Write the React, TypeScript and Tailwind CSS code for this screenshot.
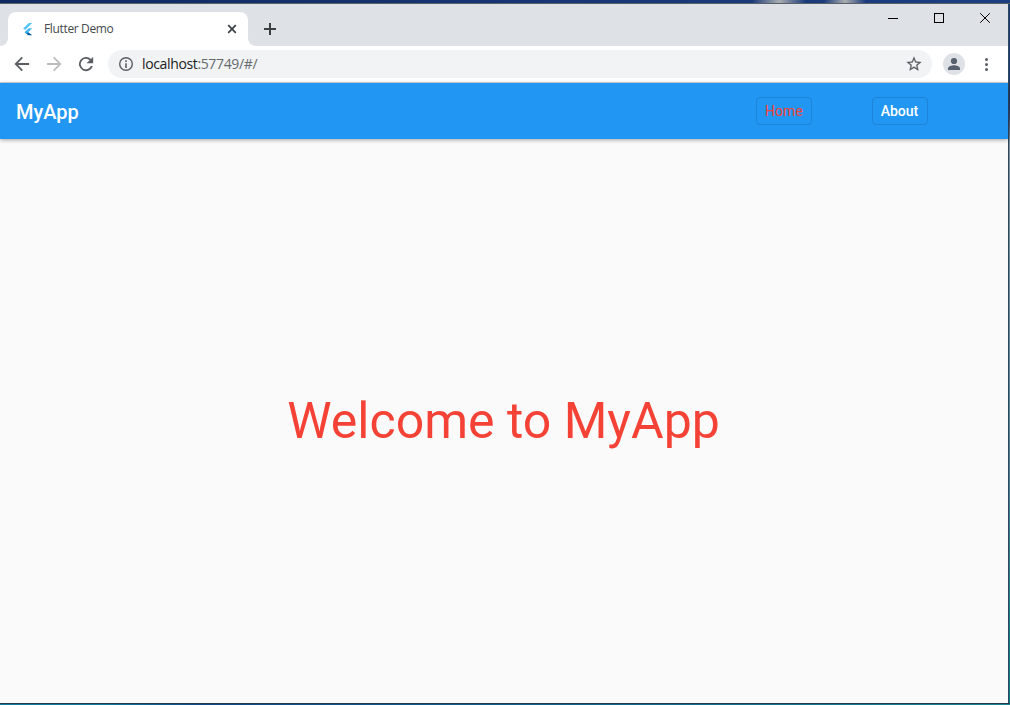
import React from 'react';

const NavButton = ({ label, active = false }: { label: string; active?: boolean }) => (
  <button
    className={
      active
        ? 'flex h-7 w-14 items-center justify-center rounded-[4px] border border-[#1e84d8] text-[14px] leading-none font-normal tracking-[0.1px] text-[#f44336]'
        : 'flex h-7 w-14 items-center justify-center rounded-[4px] border border-[#1e84d8] pr-px text-[14px] leading-none font-medium text-white'
    }
  >
    {label}
  </button>
);

const TabStrip = () => (
  <div className="flex h-[42px] shrink-0 items-start bg-[#dee1e6]">
    <svg className="mt-[34px] shrink-0" width="8" height="8" viewBox="0 0 8 8">
      <path d="M8 0v8H0a8 8 0 0 0 8-8z" fill="#fff" />
    </svg>
    <div className="mt-2 flex h-[34px] w-60 shrink-0 items-center rounded-t-lg bg-white pl-3">
      <svg className="shrink-0" width="16" height="16" viewBox="0 0 16 16">
        <path d="M8.8 2h3.4L5.2 9 3.2 7.4z" fill="#54c5f8" />
        <path d="M8.8 7.2h3.4L8.2 11.2 6.4 9.5z" fill="#40b8f5" />
        <path d="M4.6 11.2l1.8-1.8 1.9 1.8-1.9 1.8z" fill="#29a5ee" />
        <path d="M8.2 11.2l4 3.1H8.6l-2.2-1.3z" fill="#01579b" />
      </svg>
      <span className="ml-2 w-[181px] text-[12px] leading-4 tracking-[-0.35px] whitespace-nowrap text-[#45494d]">Flutter Demo</span>
      <svg className="shrink-0" width="14" height="14" viewBox="0 0 14 14" stroke="#3c4043" strokeWidth="1.7">
        <path d="M3.2 3.2l7.6 7.6M10.8 3.2l-7.6 7.6" />
      </svg>
    </div>
    <svg className="mt-[34px] shrink-0" width="8" height="8" viewBox="0 0 8 8">
      <path d="M0 0v8h8a8 8 0 0 1-8-8z" fill="#fff" />
    </svg>
    <svg className="mt-[18px] ml-[7px] shrink-0" width="14" height="14" viewBox="0 0 14 14" stroke="#3c4043" strokeWidth="2">
      <path d="M1 7h12M7 1v12" />
    </svg>
    <div className="mt-[7px] mr-4 ml-auto flex gap-[32px]">
      <svg width="14" height="14" viewBox="0 0 14 14" shapeRendering="crispEdges">
        <path d="M2 7h10v1H2z" fill="#000" />
      </svg>
      <svg width="14" height="14" viewBox="0 0 14 14" shapeRendering="crispEdges">
        <path d="M2.5 2.5h9v9h-9z" fill="none" stroke="#000" />
      </svg>
      <svg width="14" height="14" viewBox="0 0 14 14">
        <path d="M2.2 2.2l9.6 9.6M11.8 2.2l-9.6 9.6" fill="none" stroke="#000" strokeWidth="1" />
      </svg>
    </div>
  </div>
);

const Toolbar = () => (
  <div className="flex h-9 shrink-0 items-center bg-white pl-3">
    <div className="flex gap-3">
      <svg width="20" height="20" viewBox="0 0 24 24" fill="#5a5e63">
        <path d="M20.5 10.8H7.2l5.9-5.9L11.6 3.4 3 12l8.6 8.6 1.5-1.5-5.9-5.9h13.3z" />
      </svg>
      <svg width="20" height="20" viewBox="0 0 24 24" fill="#babcbe">
        <path d="M3.5 13.2h13.3l-5.9 5.9 1.5 1.5L21 12l-8.6-8.6-1.5 1.5 5.9 5.9H3.5z" />
      </svg>
      <svg width="20" height="20" viewBox="0 0 24 24" fill="#5a5e63">
        <path d="M18 6A8.5 8.5 0 1 0 20.2 14.5h-2.4A6.3 6.3 0 1 1 16.4 7.6L12.6 11.2h8V3.4z" />
      </svg>
    </div>
    <div className="ml-3 flex h-7 w-[824px] items-center rounded-full bg-[#f1f3f4] pr-[9px] pl-[10px]">
      <svg width="16" height="16" viewBox="0 0 16 16">
        <circle cx="8" cy="8" r="6.3" fill="none" stroke="#5a5e63" strokeWidth="1.4" />
        <path d="M7.2 7.2h1.6V12H7.2zM7.2 4.3h1.6v1.6H7.2z" fill="#5a5e63" />
      </svg>
      <span className="ml-2 text-[14px] leading-5 tracking-[-0.36px] text-[#202124]">
        localhost<span className="text-[#666a6e]">:57749/#/</span>
      </span>
      <svg className="ml-auto" width="18" height="18" viewBox="0 0 24 24" fill="#5a5e63" stroke="#5a5e63" strokeWidth="0.2">
        <path d="M22 9.24l-7.19-.62L12 2 9.19 8.63 2 9.24l5.46 4.73L5.82 21 12 17.27 18.18 21l-1.63-7.03L22 9.24zM12 15.4l-3.76 2.27 1-4.28-3.32-2.88 4.38-.38L12 6.1l1.71 4.04 4.38.38-3.32 2.88 1 4.28L12 15.4z" />
      </svg>
    </div>
    <svg className="ml-[11px]" width="22" height="22" viewBox="0 0 22 22">
      <circle cx="11" cy="11" r="11" fill="#dee1e6" />
      <circle cx="11" cy="8" r="3.1" fill="#56606f" />
      <path d="M5 17v-1.5C5 13.5 9 12.3 11 12.3s6 1.2 6 3.2V17z" fill="#56606f" />
    </svg>
    <svg className="ml-[14px]" width="16" height="16" viewBox="0 0 16 16" fill="#5a5e63">
      <circle cx="7.5" cy="3.5" r="1.5" />
      <circle cx="7.5" cy="8.5" r="1.5" />
      <circle cx="7.5" cy="13.5" r="1.5" />
    </svg>
  </div>
);

export default function App() {
  return (
    <div className="flex h-[705px] w-[1010px] flex-col overflow-hidden bg-[#123a6b]">
      <div className="flex h-[3px] shrink-0 bg-linear-to-r from-[#0f2a63] to-[#1d3f80]">
        <div className="ml-[752px] h-full w-[54px] bg-linear-to-r from-transparent via-[#a9adb0] to-transparent" />
        <div className="ml-[18px] h-full w-[42px] bg-linear-to-r from-transparent via-[#a9adb0] to-transparent" />
      </div>
      <div className="h-px shrink-0 bg-[#5b6169]" />
      <div className="flex h-[699px] shrink-0">
        <div className="flex w-[1008px] flex-col bg-[#fafafa] font-['Open_Sans',sans-serif]">
          <TabStrip />
          <Toolbar />
          <div className="h-px shrink-0 bg-[#d5d7da]" />
          <header className="relative flex h-14 shrink-0 items-center bg-[#2196f3] px-4 font-[Roboto,sans-serif] shadow-[0_1px_4px_rgba(0,0,0,0.35)]">
            <h1 className="pt-0.5 text-[20px] leading-6 font-medium text-white">MyApp</h1>
            <nav className="mr-16 ml-auto flex gap-[60px]">
              <NavButton label="Home" active />
              <NavButton label="About" />
            </nav>
          </header>
          <main className="flex grow items-center justify-center pr-px font-[Roboto,sans-serif] text-[50px] leading-none text-[#f44336]">
            Welcome to MyApp
          </main>
        </div>
        <div className="w-px bg-[#33475c]" />
        <div className="w-px bg-linear-to-b from-[#123a78] from-15% via-[#788d99] via-20% to-[#137b8e] to-90%" />
      </div>
      <div className="h-px shrink-0 bg-[#24394e]" />
      <div className="h-px shrink-0 bg-linear-to-r from-[#137c9e] from-10% via-[#124987] via-20% to-[#1b8491]" />
    </div>
  );
}
